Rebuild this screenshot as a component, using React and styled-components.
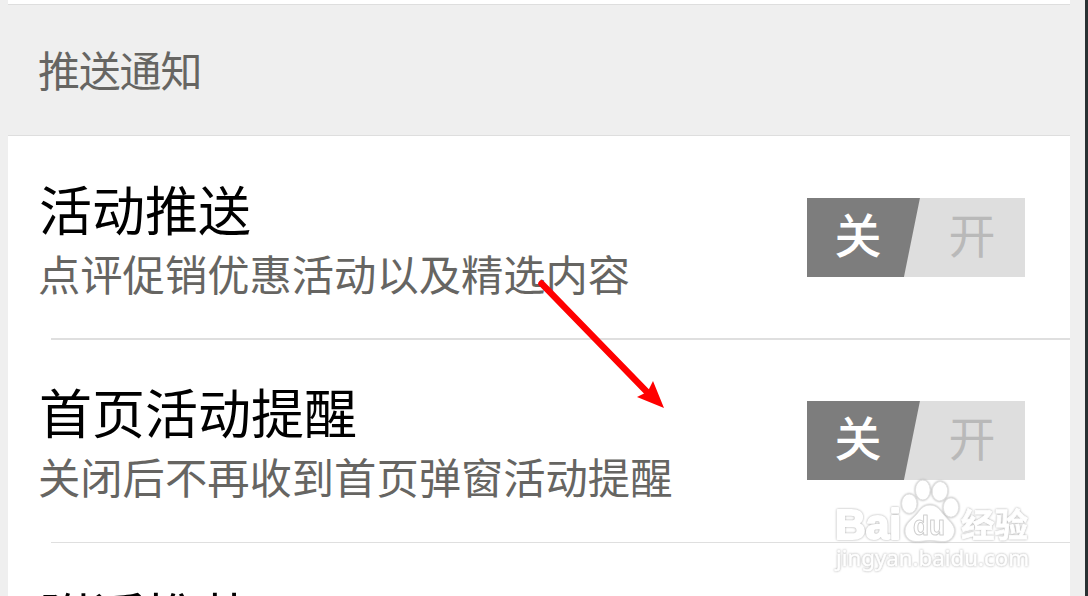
import styled, { createGlobalStyle } from "styled-components";
import { useState } from "react";

const GlobalStyle = createGlobalStyle`
  * {
    box-sizing: border-box;
  }

  body {
    margin: 0;
    overflow: hidden;
    font-family: "Noto Sans CJK SC", sans-serif;
  }
`;

const Screen = styled.div`
  position: relative;
  height: 596px;
  padding: 0 15px 0 8px;
  border-right: 3px solid #293133;
  background-color: #efefef;
  overflow: hidden;
`;

const PreviousSection = styled.div`
  height: 5px;
  border-bottom: 1px solid #dedede;
  background-color: #fff;
`;

const SectionHeader = styled.h2`
  display: flex;
  align-items: center;
  height: 131px;
  margin: 0;
  padding: 0 0 3px 30px;
  border-bottom: 1px solid #dedede;
  font-size: 42px;
  font-weight: 400;
  line-height: 1;
  letter-spacing: -1.2px;
  color: #666562;
`;

const List = styled.div`
  background-color: #fff;
`;

const Row = styled.div`
  display: flex;
  justify-content: space-between;
  height: ${(props) => props.$height}px;
  padding: ${(props) => props.$top}px 45px 0 31px;
`;

const Divider = styled.div`
  height: ${(props) => props.$size}px;
  margin-left: 43px;
  background-color: #dfdfdf;
`;

const Title = styled.div`
  height: 65px;
  font-size: 53px;
  font-weight: 400;
  line-height: 60px;
  white-space: nowrap;
  color: #000;
`;

const Description = styled.div`
  margin-left: -1px;
  font-size: 42.3px;
  font-weight: 400;
  line-height: 60px;
  white-space: nowrap;
  color: #666562;
`;

const Toggle = styled.button`
  display: grid;
  grid-template-columns: 102px 1fr;
  width: 218px;
  height: 79px;
  margin-top: 20px;
  padding: 0;
  border: none;
  background: linear-gradient(101.45deg, #7d7d7d 110.2px, #dedede 111.2px);
  font-family: inherit;
  font-size: 47px;
  line-height: 69px;
`;

const ToggleLabel = styled.span`
  padding-left: ${(props) => props.$indent || 0}px;
  font-weight: ${(props) => (props.$active ? 500 : 400)};
  color: ${(props) => (props.$active ? "#fff" : "#b9b9b9")};
`;

const Arrow = styled.svg`
  position: absolute;
  left: 530px;
  top: 272px;
`;

const Watermark = styled.svg`
  position: absolute;
  left: 826px;
  top: 474px;
  filter: drop-shadow(0 0 0.8px #aaa);
`;

const rows = [
  {
    title: "活动推送",
    description: "点评促销优惠活动以及精选内容",
    height: 202,
    top: 42,
    divider: 2,
  },
  {
    title: "首页活动提醒",
    description: "关闭后不再收到首页弹窗活动提醒",
    height: 202,
    top: 41,
    divider: 1,
  },
  { title: "附近推荐", height: 202, top: 42 },
];

function SettingRow({ row }) {
  const { title, description, height, top, divider } = row;
  const [isOn, setIsOn] = useState(false);

  return (
    <>
      <Row $height={height} $top={top}>
        <div>
          <Title>{title}</Title>
          {description && <Description>{description}</Description>}
        </div>
        {description && (
          <Toggle onClick={() => setIsOn((state) => !state)}>
            <ToggleLabel $active={!isOn}>关</ToggleLabel>
            <ToggleLabel $active={isOn} $indent={10}>
              开
            </ToggleLabel>
          </Toggle>
        )}
      </Row>
      {divider && <Divider $size={divider} />}
    </>
  );
}

function BaiduMark() {
  return (
    <Watermark
      width="212"
      height="104"
      viewBox="826 474 212 104"
      fill="#fff"
      stroke="#fff"
      strokeLinejoin="round"
    >
      <text
        x="835"
        y="539"
        fontFamily="Liberation Sans"
        fontSize="43"
        fontWeight="700"
        strokeWidth="2.2"
        textLength="66"
        lengthAdjust="spacingAndGlyphs"
      >
        Bai
      </text>
      <g stroke="#e2e2e2" strokeWidth="1">
        <ellipse cx="909.3" cy="503.7" rx="7.7" ry="9.7" />
        <ellipse cx="922.8" cy="490" rx="7.4" ry="10" />
        <ellipse
          cx="940"
          cy="491.3"
          rx="7.8"
          ry="9.7"
          transform="rotate(8 940 491)"
        />
        <ellipse cx="951" cy="507.5" rx="7.7" ry="9.7" />
        <path d="M930 505c-7 0-10 5-14 10-5 5-11 9-11 16 0 6 4 10 10 10.500 5 .500 10-1 15-1s10 1.500 15 1c6-.500 9.500-6 9.500-11 0-6-6-10-10.500-15.500-4-5-7-10-14-10z" />
      </g>
      <text
        x="913"
        y="535"
        fontFamily="Liberation Sans"
        fontSize="27"
        fontWeight="700"
        stroke="#cfcfcf"
        strokeWidth="1"
        textLength="32"
        lengthAdjust="spacingAndGlyphs"
      >
        du
      </text>
      <text
        x="961"
        y="537"
        fontFamily="Noto Sans CJK SC"
        fontSize="33.5"
        fontWeight="700"
        strokeWidth="0.8"
        textLength="67"
      >
        经验
      </text>
      <text
        x="836"
        y="566"
        fontFamily="Noto Sans"
        fontSize="22"
        strokeWidth="0.5"
        textLength="193"
        lengthAdjust="spacingAndGlyphs"
      >
        jingyan.baidu.com
      </text>
    </Watermark>
  );
}

function App() {
  return (
    <>
      <GlobalStyle />
      <Screen>
        <PreviousSection />
        <SectionHeader>推送通知</SectionHeader>
        <List>
          {rows.map((row) => (
            <SettingRow key={row.title} row={row} />
          ))}
        </List>
        <Arrow width="140" height="142" viewBox="530 272 140 142">
          <path
            d="M541.500 283.500L648 393"
            stroke="#f00"
            strokeWidth="6.5"
            strokeLinecap="round"
          />
          <path d="M664 408L637 397L645 393L649 389L653 381Z" fill="#f00" />
        </Arrow>
        <BaiduMark />
      </Screen>
    </>
  );
}

export default App;
